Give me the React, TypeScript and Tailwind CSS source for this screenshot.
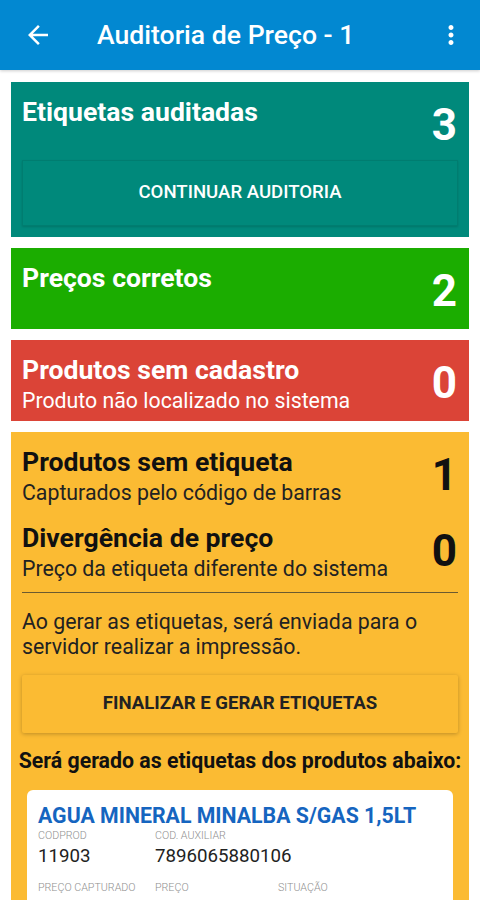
import React from "react";

const font = { fontFamily: "Roboto, 'Noto Sans', Arial, sans-serif" };

function BackIcon() {
  return (
    <svg width="30" height="30" viewBox="0 0 24 24" fill="white">
      <path d="M20 11H7.83l5.59-5.59L12 4l-8 8 8 8 1.41-1.41L7.83 13H20v-2z" />
    </svg>
  );
}

function MoreIcon() {
  return (
    <svg width="30" height="30" viewBox="0 0 24 24" fill="white">
      <path d="M12 8c1.1 0 2-.9 2-2s-.9-2-2-2-2 .9-2 2 .9 2 2 2zm0 2c-1.1 0-2 .9-2 2s.9 2 2 2 2-.9 2-2-.9-2-2-2zm0 6c-1.1 0-2 .9-2 2s.9 2 2 2 2-.9 2-2-.9-2-2-2z" />
    </svg>
  );
}

interface StatRowProps {
  title: string;
  subtitle?: string;
  value: number;
  dark?: boolean;
}

function StatRow({ title, subtitle, value, dark }: StatRowProps) {
  const color = dark ? "text-[#111111]" : "text-white";
  return (
    <div className="flex items-start justify-between">
      <div className="flex flex-col">
        <span className={`whitespace-nowrap text-[26.6px] font-bold leading-[30px] ${color}`}>{title}</span>
        {subtitle && (
          <span
            className={`mt-[4px] whitespace-nowrap text-[21.3px] leading-[24px] ${dark ? "text-[#222222]" : "text-white"}`}
          >
            {subtitle}
          </span>
        )}
      </div>
      <span className={`mt-[6px] pr-[1px] text-[44px] font-bold leading-[44px] ${color}`}>{value}</span>
    </div>
  );
}

export default function App() {
  return (
    <div className="h-[900px] w-[480px] overflow-hidden bg-white" style={font}>
      {/* Toolbar */}
      <div className="relative z-10 flex h-[70px] items-center bg-[#0288d1] shadow-[0_1px_3px_rgba(0,0,0,0.2)]">
        <div className="ml-[23px] flex w-[30px] justify-center">
          <BackIcon />
        </div>
        <h1 className="ml-[44px] text-[26.6px] font-medium text-white">Auditoria de Preço - 1</h1>
        <div className="ml-auto mr-[14px]">
          <MoreIcon />
        </div>
      </div>

      <div className="flex flex-col gap-[11px] px-[11px] pt-[12px]">
        {/* Auditadas */}
        <div className="flex h-[155px] flex-col bg-[#00897b] px-[11px] pt-[15px]">
          <StatRow title="Etiquetas auditadas" value={3} />
          <button className="mt-[13px] flex h-[66px] items-center justify-center border border-[#007d70] bg-[#00897b] text-[18.6px] font-medium text-white shadow-[0_1px_2px_rgba(0,0,0,0.15)]">
            CONTINUAR AUDITORIA
          </button>
        </div>

        {/* Corretos */}
        <div className="h-[81px] bg-[#1bad00] px-[11px] pt-[15px]">
          <StatRow title="Preços corretos" value={2} />
        </div>

        {/* Sem cadastro */}
        <div className="h-[81px] bg-[#db4437] px-[11px] pt-[15px]">
          <StatRow title="Produtos sem cadastro" subtitle="Produto não localizado no sistema" value={0} />
        </div>

        {/* Etiquetas a gerar */}
        <div className="flex flex-col bg-[#fbbb33] px-[11px] pb-[20px] pt-[15px]">
          <StatRow title="Produtos sem etiqueta" subtitle="Capturados pelo código de barras" value={1} dark />
          <div className="mt-[18px]">
            <StatRow title="Divergência de preço" subtitle="Preço da etiqueta diferente do sistema" value={0} dark />
          </div>
          <div className="mt-[11px] h-px bg-[#6b5a30]" />
          <p className="mt-[16px] text-[21.3px] leading-[25px] text-[#222222]">
            Ao gerar as etiquetas, será enviada para o servidor realizar a impressão.
          </p>
          <button className="mt-[16px] flex h-[58px] items-center justify-center rounded-[2px] bg-[#fbbb33] text-[18.6px] font-bold text-[#222222] shadow-[0_1px_4px_rgba(0,0,0,0.25)]">
            FINALIZAR E GERAR ETIQUETAS
          </button>
          <p className="-mx-[11px] mt-[16px] whitespace-nowrap text-center text-[21.3px] font-bold leading-[24px] text-[#111111]">
            Será gerado as etiquetas dos produtos abaixo:
          </p>

          {/* Produto */}
          <div className="mx-[5px] mt-[17px] rounded-[6px] bg-white px-[11px] pb-[12px] pt-[14px]">
            <div className="whitespace-nowrap text-[21.3px] font-bold leading-[24px] text-[#1565c0]">
              AGUA MINERAL MINALBA S/GAS 1,5LT
            </div>
            <div className="mt-[1px] flex">
              <div className="flex w-[117px] flex-col">
                <span className="text-[10.7px] font-light leading-[13px] text-[#8f8f8f]">CODPROD</span>
                <span className="mt-[2px] text-[18.7px] leading-[24px] text-[#222222]">11903</span>
              </div>
              <div className="flex flex-col">
                <span className="text-[10.7px] font-light leading-[13px] text-[#8f8f8f]">COD. AUXILIAR</span>
                <span className="mt-[2px] text-[18.7px] leading-[24px] text-[#222222]">7896065880106</span>
              </div>
            </div>
            <div className="mt-[13px] flex">
              <div className="w-[117px] text-[10.7px] font-light leading-[13px] text-[#8f8f8f]">PREÇO CAPTURADO</div>
              <div className="w-[123px] text-[10.7px] font-light leading-[13px] text-[#8f8f8f]">PREÇO</div>
              <div className="text-[10.7px] font-light leading-[13px] text-[#8f8f8f]">SITUAÇÃO</div>
            </div>
          </div>
        </div>
      </div>
    </div>
  );
}
